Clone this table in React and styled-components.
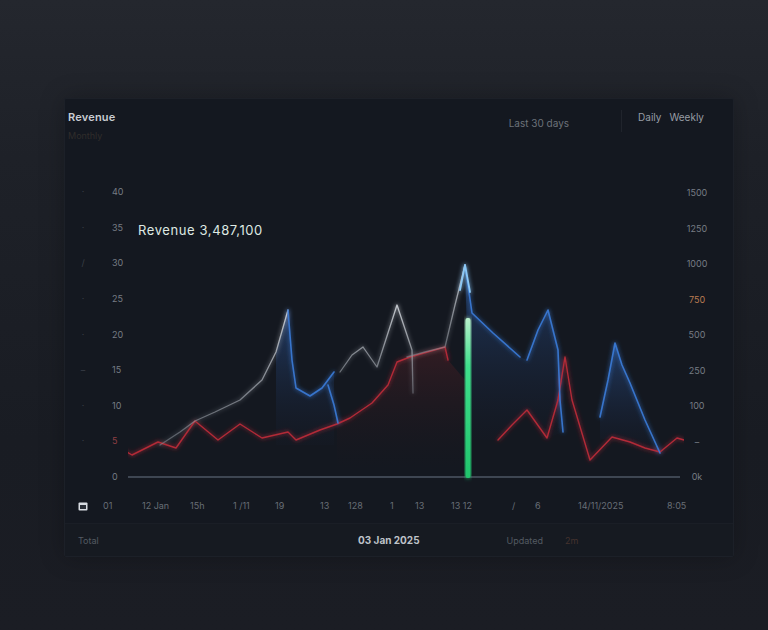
import styled, { createGlobalStyle } from "styled-components";

const GlobalStyle = createGlobalStyle`
  body {
    margin: 0;
    background: #1b1e25;
    font-family: Inter, "Liberation Sans", sans-serif;
  }
`;

// chart data, in the same coordinates as the plot's viewBox
const redLines = [
  "120,448 132,455 158,442 176,448 195,421 218,440 240,424 262,438 288,432 296,440 320,430 337,424 350,418 372,403 388,385 397,362 410,357 445,347 448,360",
  "498,440 512,425 527,410 547,438 558,400 565,357 572,400 590,460 612,437 630,442 645,448 660,452 677,438 684,440",
];
const whiteLines = [
  "160,445 180,432 195,421 215,412 240,400 262,380 276,352 288,310",
  "340,372 352,355 363,347 377,367 397,305 412,350 413,393",
  "407,357 425,352 445,347 455,305 465,265",
];
const blueLines = [
  "288,310 292,360 296,388 310,396 322,388 334,372",
  "328,385 334,405 338,423",
  "465,265 469,292 472,313 493,333 520,357",
  "527,360 538,330 548,310 558,350 560,400 563,432",
  "600,417 608,380 615,343 622,365 630,383 645,420 660,453",
];
const blueAreas = [
  "276,352 288,310 292,360 296,388 310,396 322,388 334,372 334,445 276,445",
  "465,265 469,292 472,313 493,333 520,357 527,360 538,330 548,310 558,350 560,400 563,432 547,438 527,410 512,425 498,440 470,440",
  "600,417 608,380 615,343 622,365 630,383 645,420 660,453 612,437 600,440",
];
const redArea =
  "337,424 350,418 372,403 388,385 397,362 410,357 445,347 448,360 465,380 465,470 337,470";

const leftLabels = ["40", "35", "30", "25", "20", "15", "10", "5", "0"];
const faintLabels = ["·", "·", "/", "·", "·", "–", "·", "·", ""];
const rightLabels = ["1500", "1250", "1000", "750", "500", "250", "100", "–", "0k"];

const xLabels = [
  { x: 78, icon: true },
  { x: 103, text: "01" },
  { x: 142, text: "12 Jan" },
  { x: 190, text: "15h" },
  { x: 233, text: "1 /11" },
  { x: 275, text: "19" },
  { x: 320, text: "13" },
  { x: 348, text: "128" },
  { x: 390, text: "1" },
  { x: 415, text: "13" },
  { x: 451, text: "13 12" },
  { x: 512, text: "/" },
  { x: 535, text: "6" },
  { x: 578, text: "14/11/2025" },
  { x: 667, text: "8:05" },
];

const App = () => {
  return (
    <Page>
      <GlobalStyle />
      <Panel>
        <Header>
          <TitleBlock>
            <Title>Revenue</Title>
            <Sub>Monthly</Sub>
          </TitleBlock>
          <RightGroup>
            <Range>Last 30 days</Range>
            <Divider />
            <Tab>Daily</Tab>
            <Tab>Weekly</Tab>
          </RightGroup>
        </Header>

        <ChartArea>
          <FaintAxis>
            {faintLabels.map((l, i) => (
              <AxisLabel key={i} $dim>{l}</AxisLabel>
            ))}
          </FaintAxis>
          <AxisCol>
            {leftLabels.map((l, i) => (
              <AxisLabel key={i} $red={l === "5"}>{l}</AxisLabel>
            ))}
          </AxisCol>
          <Plot viewBox="128 180 556 305" width="556" height="305">
            <defs>
              <filter id="glow" x="-20%" y="-20%" width="140%" height="140%">
                <feGaussianBlur stdDeviation="2" result="b" />
                <feMerge>
                  <feMergeNode in="b" />
                  <feMergeNode in="SourceGraphic" />
                </feMerge>
              </filter>
              <linearGradient id="blueFill" x1="0" y1="0" x2="0" y2="1">
                <stop offset="0" stopColor="#3570cc" stopOpacity="0.4" />
                <stop offset="1" stopColor="#1b2a4a" stopOpacity="0.05" />
              </linearGradient>
              <linearGradient id="redFill" x1="0" y1="0" x2="0" y2="1">
                <stop offset="0" stopColor="#6a2428" stopOpacity="0.35" />
                <stop offset="1" stopColor="#2a1517" stopOpacity="0" />
              </linearGradient>
              <linearGradient id="whiteFade" x1="0" y1="1" x2="0" y2="0">
                <stop offset="0" stopColor="#8d939c" stopOpacity="0.5" />
                <stop offset="1" stopColor="#d0d4da" stopOpacity="0.9" />
              </linearGradient>
              <linearGradient id="bar" x1="0" y1="0" x2="0" y2="1">
                <stop offset="0" stopColor="#b9f0cc" />
                <stop offset="0.3" stopColor="#3fe08c" />
                <stop offset="1" stopColor="#21c46c" />
              </linearGradient>
            </defs>

            <polygon points={redArea} fill="url(#redFill)" />
            {blueAreas.map((p, i) => (
              <polygon key={i} points={p} fill="url(#blueFill)" />
            ))}

            <line x1="128" y1="477" x2="680" y2="477" stroke="#4d5663" strokeWidth="1.5" />

            <g filter="url(#glow)" fill="none" strokeLinejoin="round" strokeLinecap="round">
              {redLines.map((p, i) => (
                <polyline key={i} points={p} stroke="#b22a37" strokeWidth="1.4" />
              ))}
              {whiteLines.map((p, i) => (
                <polyline key={i} points={p} stroke="url(#whiteFade)" strokeWidth="1.3" />
              ))}
              {blueLines.map((p, i) => (
                <polyline key={i} points={p} stroke="#3a7bd8" strokeWidth="1.6" strokeOpacity="0.9" />
              ))}
              <polyline points="460,290 465,265 470,292" stroke="#8cc8f5" strokeWidth="1.8" />
            </g>

            <rect x="465.5" y="318" width="5" height="160" rx="2" fill="url(#bar)" filter="url(#glow)" />

            <text
              x="138"
              y="235"
              fill="#dfe9e3"
              fontSize="13"
              letterSpacing="0.6"
              fontFamily="Inter, 'Liberation Sans', sans-serif"
            >
              Revenue 3,487,100
            </text>
          </Plot>
          <RightAxis>
            {rightLabels.map((l, i) => (
              <AxisLabel key={i} $orange={l === "750"}>{l}</AxisLabel>
            ))}
          </RightAxis>
        </ChartArea>

        <XAxis>
          {xLabels.map((l, i) => {
            const next = xLabels[i + 1];
            return (
              <XLabel key={i} $w={next ? next.x - l.x : null}>
                {l.icon ? (
                  <svg width="10" height="10" viewBox="0 0 10 10">
                    <rect x="0.5" y="1.5" width="9" height="8" rx="1" fill="#d8dce2" />
                    <rect x="2" y="4" width="6" height="4" fill="#2a2f38" />
                  </svg>
                ) : (
                  l.text
                )}
              </XLabel>
            );
          })}
        </XAxis>

        <Footer>
          <FootText>Total</FootText>
          <FootDate>03 Jan 2025</FootDate>
          <FootRight>
            <FootText>Updated</FootText>
            <FootAccent>2m</FootAccent>
          </FootRight>
        </Footer>
      </Panel>
    </Page>
  );
};

const Page = styled.div`
  height: 630px;
  box-sizing: border-box;
  padding: 98px 0 0 64px;
  background: linear-gradient(180deg, #24272e 0%, #1e2128 25%, #191c23 70%, #1b1d24 100%);
`;

const Panel = styled.div`
  width: 670px;
  height: 459px;
  box-sizing: border-box;
  background: #141820;
  border: 1px solid #1c2028;
  border-radius: 2px;
  display: flex;
  flex-direction: column;
  box-shadow: 0 0 24px rgba(0, 0, 0, 0.25);
`;

const Header = styled.div`
  height: 81px;
  box-sizing: border-box;
  padding: 11px 29px 0 3px;
  display: flex;
  justify-content: space-between;
  align-items: flex-start;
`;

const TitleBlock = styled.div`
  display: flex;
  flex-direction: column;
  gap: 6px;
`;

const Title = styled.div`
  font-size: 11px;
  line-height: 14px;
  font-weight: 600;
  color: #c9cdd3;
  letter-spacing: 0.2px;
`;

const Sub = styled.div`
  font-size: 9px;
  color: #302d2b;
`;

const RightGroup = styled.div`
  display: flex;
  align-items: flex-start;
`;

const Range = styled.div`
  font-size: 10px;
  line-height: 12px;
  margin-top: 7px;
  color: #6c727a;
`;

const Divider = styled.div`
  width: 1px;
  height: 22px;
  background: #20242c;
  margin: 0 16px 0 52px;
`;

const Tab = styled.div`
  font-size: 10px;
  line-height: 14px;
  color: #979da5;
  & + & {
    margin-left: 8px;
  }
`;

const ChartArea = styled.div`
  height: 305px;
  display: flex;
`;

const AxisCol = styled.div`
  width: 16px;
  margin-left: 22px;
  display: flex;
  flex-direction: column;
  justify-content: space-between;
  padding: 6px 0 2px;
`;

const FaintAxis = styled(AxisCol)`
  width: 14px;
  margin-left: 11px;
  align-items: center;
`;

const RightAxis = styled(AxisCol)`
  width: 26px;
  margin-left: 0;
  align-items: center;
  padding-top: 7px;
`;

const AxisLabel = styled.span`
  font-size: 9px;
  line-height: 12px;
  height: 12px;
  color: ${(p) => (p.$orange ? "#b97b52" : p.$red ? "#8e3f43" : p.$dim ? "#3a3f47" : "#767c84")};
`;

const Plot = styled.svg`
  display: block;
  flex: none;
`;

const XAxis = styled.div`
  height: 30px;
  box-sizing: border-box;
  padding: 12px 0 0 13px;
  display: flex;
`;

const XLabel = styled.div`
  flex: none;
  width: ${(p) => (p.$w ? `${p.$w}px` : "auto")};
  font-size: 9px;
  line-height: 12px;
  color: #686e76;
  white-space: nowrap;
  display: flex;
  align-items: center;
`;

const Footer = styled.div`
  margin-top: 8px;
  height: 33px;
  box-sizing: border-box;
  padding: 0 0 0 13px;
  border-top: 1px solid #1a1e26;
  background: #161a21;
  display: grid;
  grid-template-columns: 280px auto 1fr;
  align-items: center;
`;

const FootText = styled.span`
  font-size: 9px;
  color: #545a62;
`;

const FootDate = styled.span`
  font-size: 10px;
  font-weight: 700;
  color: #bfc3c9;
`;

const FootRight = styled.div`
  padding-left: 87px;
  display: flex;
  gap: 22px;
`;

const FootAccent = styled.span`
  font-size: 9px;
  color: #45322e;
`;

export default App;
